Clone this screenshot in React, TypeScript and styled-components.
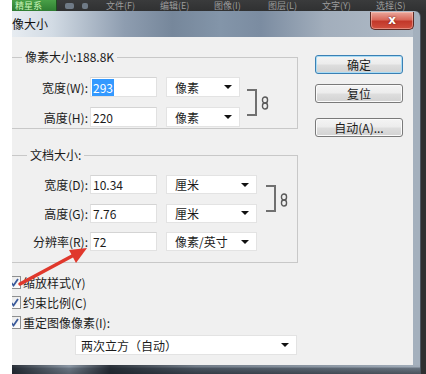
import React from 'react'
import styled, {createGlobalStyle} from 'styled-components'

const GlobalStyle = createGlobalStyle`
  html, body {
    margin: 0;
    padding: 0;
    background: #ffffff;
  }
  * {
    box-sizing: border-box;
  }
`

const Screen = styled.div`
  width: 426px;
  height: 374px;
  overflow: hidden;
  display: flex;
  padding-left: 12px;
  background: #ffffff;
  font-family: "Noto Sans CJK SC", "Noto Sans", sans-serif;
  font-size: 12px;
  color: #1b1b1b;
`

const Desk = styled.div`
  flex: 1;
  display: flex;
  flex-direction: column;
  background: #2f3031;
`

const TopStrip = styled.div`
  height: 11px;
  display: flex;
  align-items: center;
  overflow: hidden;
  background: linear-gradient(#3a3b3c, #303132);
`

const Logo = styled.div`
  width: 45px;
  height: 11px;
  background: linear-gradient(#49a047, #2e7d32);
  border-right: 1px solid #1d4d1f;
  color: #c9f5b8;
  font-size: 9px;
  line-height: 11px;
  padding-left: 3px;
  overflow: hidden;
`

const ToolIcon = styled.span<{w: number}>`
  width: ${(p) => p.w}px;
  height: 6px;
  margin-left: 8px;
  border-radius: 2px;
  background: #6f7a86;
`

const Menu = styled.div`
  display: flex;
  margin-left: 18px;
  gap: 24px;
  color: #9c9c9c;
  font-size: 9px;
  line-height: 11px;
  white-space: nowrap;
`

const MenuItem = styled.span`
  width: 30px;
`

const Window = styled.div`
  flex: 1;
  margin-right: 5px;
  display: flex;
  flex-direction: column;
  border-top-right-radius: 6px;
  background: linear-gradient(to right, #a9b4c0, #a4b0bd);
  border-right: 1px solid #4b5560;
  padding-right: 7px;
`

const TitleBar = styled.div`
  height: 26px;
  display: flex;
  justify-content: space-between;
  align-items: flex-start;
  background: linear-gradient(
    to right,
    #e7ecf1 0%,
    #d2dbe4 10%,
    #8e9db0 28%,
    #76879b 40%,
    #8395a9 52%,
    #7b8ca1 62%,
    #a2aebc 78%,
    #b0bbc7 100%
  );
`

const Title = styled.div`
  height: 26px;
  line-height: 26px;
  font-size: 12px;
  color: #111;
`

const CloseButton = styled.div`
  width: 44px;
  height: 18px;
  margin-top: 1px;
  margin-right: -1px;
  border: 1px solid #5c2a24;
  border-top: none;
  border-radius: 0 0 5px 5px;
  background: linear-gradient(#eaa79b 0%, #d9695b 45%, #c2382a 55%, #d0503f 100%);
  box-shadow: inset 0 0 0 1px rgba(255, 210, 200, 0.45);
  color: #ffffff;
  font-family: "DejaVu Sans", sans-serif;
  font-weight: bold;
  font-size: 12px;
  line-height: 16px;
  text-align: center;
  text-shadow: 0 0 2px #5a1a12;
`

const Content = styled.div`
  position: relative;
  height: 328px;
  background: #f0f0f0;
  overflow: hidden;
  padding: 13px 0 10px 0;
  display: flex;
  flex-direction: column;
`

const Upper = styled.div`
  display: flex;
  align-items: flex-start;
`

const Groups = styled.div`
  width: 286px;
  display: flex;
  flex-direction: column;
`

const Group = styled.fieldset<{top: number; bottom: number}>`
  margin: ${(p) => p.top}px 0 0 0;
  padding: 13px 0 ${(p) => p.bottom}px 0;
  border: 1px solid #c8c8c8;
  border-left: none;
  min-width: 0;
`

const Legend = styled.legend<{indent: number}>`
  margin-left: ${(p) => p.indent}px;
  padding: 0 3px;
  height: 14px;
  line-height: 14px;
  font-size: 12px;
  color: #1b1b1b;
`

const Fields = styled.div<{rowGap: number; selectWidth: number}>`
  display: grid;
  grid-template-columns: 78px 67px ${(p) => p.selectWidth + 9}px auto;
  row-gap: ${(p) => p.rowGap}px;
  align-items: center;
`

const Label = styled.div`
  padding-right: 2px;
  text-align: right;
  white-space: nowrap;
`

const TextBox = styled.div<{h: number}>`
  height: ${(p) => p.h}px;
  background: #ffffff;
  border: 1px solid #e1e1e1;
  border-top-color: #d4d4d4;
  padding-left: 1px;
  display: flex;
  align-items: center;
`

const Value = styled.span<{selected?: boolean}>`
  line-height: 17px;
  padding: 0 1px;
  background: ${(p) => (p.selected ? '#3399ff' : 'transparent')};
  color: ${(p) => (p.selected ? '#ffffff' : '#1b1b1b')};
`

const Select = styled.div<{w: number; h: number}>`
  margin-left: 9px;
  width: ${(p) => p.w}px;
  height: ${(p) => p.h}px;
  background: #ffffff;
  border: 1px solid #e3e3e3;
  display: flex;
  align-items: center;
  justify-content: space-between;
  padding: 0 7px 0 ${(p) => (p.w > 200 ? 5 : 8)}px;
  white-space: nowrap;
`

const Caret = styled.span`
  width: 0;
  height: 0;
  border-left: 4px solid transparent;
  border-right: 4px solid transparent;
  border-top: 4px solid #111;
`

const LinkCell = styled.div<{offset: number}>`
  grid-column: 4;
  grid-row: 1 / span 2;
  display: flex;
  align-items: center;
  margin-left: ${(p) => p.offset}px;
`

const Bracket = styled.div<{h: number}>`
  width: 10px;
  height: ${(p) => p.h}px;
  border: 2px solid #707070;
  border-left: none;
`

const ChainIcon = styled.svg`
  margin-left: 4px;
  margin-top: 2px;
`

const Buttons = styled.div`
  margin-left: 17px;
  margin-top: 5px;
  display: flex;
  flex-direction: column;
`

const Button = styled.div<{primary?: boolean; gapTop: number}>`
  width: 88px;
  height: 19px;
  margin-top: ${(p) => p.gapTop}px;
  border: 1px solid ${(p) => (p.primary ? '#3a80b4' : '#7a7a7a')};
  border-radius: 3px;
  background: linear-gradient(#f4f4f4 0%, #ececec 48%, #dedede 52%, #d2d2d2 100%);
  box-shadow: ${(p) => (p.primary ? 'inset 0 0 0 1px #a9dcf5' : 'inset 0 0 0 1px #fbfbfb')};
  text-align: center;
  line-height: 17px;
  font-size: 12px;
  color: #1b1b1b;
`

const Checks = styled.div`
  margin-top: 9px;
  display: flex;
  flex-direction: column;
`

const CheckRow = styled.div`
  height: 20px;
  display: flex;
  align-items: center;
  white-space: nowrap;
`

const CheckBox = styled.span`
  width: 13px;
  height: 13px;
  margin-left: -4px;
  margin-right: 2px;
  border: 1px solid #8e8f8f;
  background: linear-gradient(135deg, #e6e6e6, #ffffff);
  display: flex;
  align-items: center;
  justify-content: center;
`

const Resample = styled.div`
  margin-top: 3px;
  margin-left: 63px;
`

const Annotation = styled.svg`
  position: absolute;
  left: 0;
  top: 0;
  pointer-events: none;
`

const BottomFrame = styled.div`
  height: 9px;
  margin-right: -7px;
  background:
    linear-gradient(to right, rgba(30, 36, 44, 0.9) 0%, rgba(120, 132, 146, 0.6) 14%, rgba(30, 36, 44, 0.9) 24%, rgba(60, 70, 82, 0.5) 45%, rgba(150, 162, 176, 0.3) 100%),
    linear-gradient(#a7b2be 0, #a7b2be 2px, #56616d 3px, #2a3038 100%);
`

function Chain() {
  return (
    <ChainIcon width="8" height="14" viewBox="0 0 8 14">
      <rect x="1.5" y="1" width="5" height="6" rx="2.5" fill="none" stroke="#5a5a5a" strokeWidth="1.4" />
      <rect x="1.5" y="7" width="5" height="6" rx="2.5" fill="none" stroke="#5a5a5a" strokeWidth="1.4" />
    </ChainIcon>
  )
}

function Check() {
  return (
    <svg width="9" height="9" viewBox="0 0 9 9">
      <path d="M1 4.5 L3.5 7.5 L8 1" fill="none" stroke="#3b5a9a" strokeWidth="1.8" />
    </svg>
  )
}

type Row = {label: string; value: string; unit: string; selected?: boolean}

const pixelRows: Row[] = [
  {label: '宽度(W):', value: '293', unit: '像素', selected: true},
  {label: '高度(H):', value: '220', unit: '像素'},
]

const docRows: Row[] = [
  {label: '宽度(D):', value: '10.34', unit: '厘米'},
  {label: '高度(G):', value: '7.76', unit: '厘米'},
  {label: '分辨率(R):', value: '72', unit: '像素/英寸'},
]

const menus = ['文件(F)', '编辑(E)', '图像(I)', '图层(L)', '文字(Y)', '选择(S)']

function FieldGrid({rows, h, rowGap, selectWidth, linkOffset, bracketH}: {
  rows: Row[]
  h: number
  rowGap: number
  selectWidth: number
  linkOffset: number
  bracketH: number
}) {
  return (
    <Fields rowGap={rowGap} selectWidth={selectWidth}>
      {rows.map((r, i) => (
        <React.Fragment key={r.label}>
          <Label style={{gridRow: i + 1}}>{r.label}</Label>
          <TextBox h={h} style={{gridRow: i + 1}}>
            <Value selected={r.selected}>{r.value}</Value>
          </TextBox>
          <Select w={selectWidth} h={h} style={{gridRow: i + 1}}>
            {r.unit}
            <Caret />
          </Select>
        </React.Fragment>
      ))}
      <LinkCell offset={linkOffset}>
        <Bracket h={bracketH} />
        <Chain />
      </LinkCell>
    </Fields>
  )
}

export default function App() {
  return (
    <Screen>
      <GlobalStyle />
      <Desk>
        <TopStrip>
          <Logo>精星系</Logo>
          <ToolIcon w={9} />
          <ToolIcon w={6} />
          <Menu>
            {menus.map((m) => (
              <MenuItem key={m}>{m}</MenuItem>
            ))}
          </Menu>
        </TopStrip>
        <Window>
          <TitleBar>
            <Title>像大小</Title>
            <CloseButton>x</CloseButton>
          </TitleBar>
          <Content>
            <Upper>
              <Groups>
                <Group top={0} bottom={1}>
                  <Legend indent={10}>像素大小:188.8K</Legend>
                  <FieldGrid rows={pixelRows} h={20} rowGap={10} selectWidth={74} linkOffset={7} bracketH={27} />
                </Group>
                <Group top={19} bottom={11}>
                  <Legend indent={15}>文档大小:</Legend>
                  <FieldGrid rows={docRows} h={19} rowGap={9.5} selectWidth={91} linkOffset={9} bracketH={27} />
                </Group>
              </Groups>
              <Buttons>
                <Button primary gapTop={0}>确定</Button>
                <Button gapTop={10}>复位</Button>
                <Button gapTop={15}>自动(A)...</Button>
              </Buttons>
            </Upper>
            <Checks>
              <CheckRow><CheckBox><Check /></CheckBox>缩放样式(Y)</CheckRow>
              <CheckRow><CheckBox><Check /></CheckBox>约束比例(C)</CheckRow>
              <CheckRow><CheckBox><Check /></CheckBox>重定图像像素(I):</CheckRow>
            </Checks>
            <Resample>
              <Select w={222} h={20} style={{marginLeft: 0}}>
                两次立方（自动）
                <Caret />
              </Select>
            </Resample>
            <Annotation width="120" height="260">
              <line x1="8" y1="247" x2="62" y2="218" stroke="#e0382c" strokeWidth="3.5" strokeLinecap="round" />
              <polygon points="75,211 57,213 64,226" fill="#e0382c" />
            </Annotation>
          </Content>
          <BottomFrame />
        </Window>
      </Desk>
    </Screen>
  )
}
